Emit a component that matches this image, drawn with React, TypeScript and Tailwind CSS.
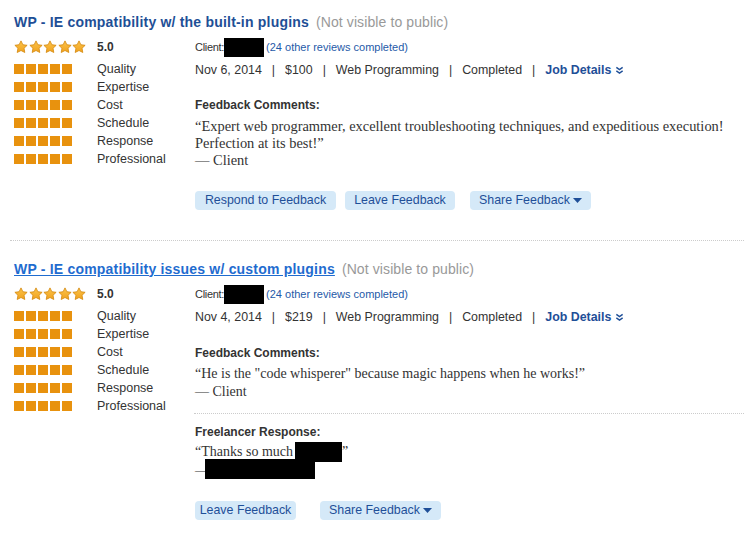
import React from 'react';

const sans = { fontFamily: '"Liberation Sans", Arial, sans-serif' };
const serif = { fontFamily: '"Liberation Serif", "Times New Roman", serif' };

const labels = ['Quality', 'Expertise', 'Cost', 'Schedule', 'Response', 'Professional'];

function Star() {
  return (
    <svg width="14" height="14" viewBox="0 0 24 24" className="mr-[0.6px]">
      <defs>
        <linearGradient id="sg" x1="0" y1="0" x2="0" y2="1">
          <stop offset="0" stopColor="#fcc44a" />
          <stop offset="1" stopColor="#f0a21e" />
        </linearGradient>
      </defs>
      <path
        d="M12 1.5l3.2 6.6 7.3 1-5.3 5.1 1.3 7.2L12 18l-6.5 3.4 1.3-7.2L1.5 9.1l7.3-1z"
        fill="url(#sg)"
        stroke="#d4880c"
        strokeWidth="1.4"
        strokeLinejoin="round"
      />
    </svg>
  );
}

function Squares() {
  return (
    <div className="flex gap-[2px]">
      {[0, 1, 2, 3, 4].map((i) => (
        <div key={i} className="h-[10px] w-[10px] bg-[#e8920e]" />
      ))}
    </div>
  );
}

function Ratings() {
  return (
    <div className="w-[181px] shrink-0">
      <div className="flex h-[22px] items-center">
        <div className="flex w-[83px]">
          {[0, 1, 2, 3, 4].map((i) => (
            <Star key={i} />
          ))}
        </div>
        <span className="text-[12px] font-bold text-[#333]">5.0</span>
      </div>
      <div className="mt-[2px]">
        {labels.map((l) => (
          <div key={l} className="flex h-[18px] items-center">
            <div className="w-[83px]">
              <Squares />
            </div>
            <span className="text-[12.5px] text-[#333]">{l}</span>
          </div>
        ))}
      </div>
    </div>
  );
}

function DoubleChevron() {
  return (
    <svg width="9" height="9" viewBox="0 0 10 10" className="ml-[4px]">
      <path d="M1.5 1.5L5 4l3.5-2.5M1.5 5.5L5 8l3.5-2.5" fill="none" stroke="#1f4f98" strokeWidth="1.6" />
    </svg>
  );
}

function Caret() {
  return (
    <svg width="9" height="6" viewBox="0 0 9 6" className="ml-[3px]">
      <path d="M0 0h9L4.5 5z" fill="#1f4f98" />
    </svg>
  );
}

function Btn({ children, w, caret }: { children: React.ReactNode; w: string; caret?: boolean }) {
  return (
    <div
      className={`flex h-[19px] items-center justify-center rounded-[4px] bg-[#d5e9f8] text-[12.4px] text-[#1f4f98] ${w}`}
    >
      {children}
      {caret && <Caret />}
    </div>
  );
}

function Meta({ date, price }: { date: string; price: string }) {
  return (
    <>
      <div className="flex h-[22px] items-center text-[11px]">
        <span className="tracking-[-0.3px] text-[#333]">Client:</span>
        <span className="inline-block h-[19px] w-[40px] bg-black" />
        <span className="ml-[2px] text-[#1f5aa8]">(24 other reviews completed)</span>
      </div>
      <div className="flex h-[24px] items-center text-[12.4px] text-[#333]">
        <span>{date}</span>
        <span className="mx-[10px]">|</span>
        <span>{price}</span>
        <span className="mx-[10px]">|</span>
        <span>Web Programming</span>
        <span className="mx-[10px]">|</span>
        <span>Completed</span>
        <span className="mx-[10px]">|</span>
        <span className="font-bold text-[#1f4f98]">Job Details</span>
        <DoubleChevron />
      </div>
    </>
  );
}

export default function App() {
  return (
    <div className="min-h-[537px] w-[744px] bg-white pl-[14px] pt-[10px]" style={sans}>
      {/* first review */}
      <div className="flex h-[24px] items-center">
        <span className="text-[14px] font-bold tracking-[0.2px] text-[#1e4f96]">WP - IE compatibility w/ the built-in plugins</span>
        <span className="ml-[7px] text-[14px] tracking-[0.1px] text-[#999]">(Not visible to public)</span>
      </div>
      <div className="mt-[2px] flex">
        <Ratings />
        <div className="flex-1">
          <Meta date="Nov 6, 2014" price="$100" />
          <div className="mt-[14px] flex h-[18px] items-center text-[12px] font-bold text-[#333]">Feedback Comments:</div>
          <div className="mt-[4px] text-[14.45px] leading-[17px] text-[#333]" style={serif}>
            <p>“Expert web programmer, excellent troubleshooting techniques, and expeditious execution! Perfection at its best!”</p>
            <p>— Client</p>
          </div>
          <div className="mt-[22px] flex">
            <Btn w="w-[141px]">Respond to Feedback</Btn>
            <Btn w="ml-[9px] w-[110px]">Leave Feedback</Btn>
            <Btn w="ml-[15px] w-[121px]" caret>
              Share Feedback
            </Btn>
          </div>
        </div>
      </div>
      <div className="ml-[-4px] mt-[30px] border-t border-dotted border-[#ccc]" />

      {/* second review */}
      <div className="mt-[16px] flex h-[24px] items-center">
        <span className="text-[14px] font-bold tracking-[0.2px] text-[#1f6ccf] underline">WP - IE compatibility issues w/ custom plugins</span>
        <span className="ml-[7px] text-[14px] tracking-[0.1px] text-[#999]">(Not visible to public)</span>
      </div>
      <div className="mt-[2px] flex">
        <Ratings />
        <div className="flex-1">
          <Meta date="Nov 4, 2014" price="$219" />
          <div className="mt-[15px] flex h-[18px] items-center text-[12px] font-bold text-[#333]">Feedback Comments:</div>
          <div className="mt-[3px] text-[14px] leading-[18px] text-[#333]" style={serif}>
            <p>“He is the "code whisperer" because magic happens when he works!”</p>
            <p>— Client</p>
          </div>
          <div className="ml-[-1px] mt-[12px] border-t border-dotted border-[#ccc]" />
          <div className="mt-[9px] flex h-[18px] items-center text-[12px] font-bold text-[#333]">Freelancer Response:</div>
          <div className="mt-[1px] text-[14px] leading-[18px] text-[#333]" style={serif}>
            <p className="flex h-[20px] items-center">
              “Thanks so much <span className="ml-[2px] inline-block h-[20px] w-[47px] bg-black" />”
            </p>
            <p className="flex h-[18px] items-center">
              — <span className="ml-[-4px] mt-[-4px] inline-block h-[20px] w-[110px] bg-black" />
            </p>
          </div>
          <div className="mt-[21px] flex">
            <Btn w="w-[101px]">Leave Feedback</Btn>
            <Btn w="ml-[24px] w-[121px]" caret>
              Share Feedback
            </Btn>
          </div>
        </div>
      </div>
    </div>
  );
}
